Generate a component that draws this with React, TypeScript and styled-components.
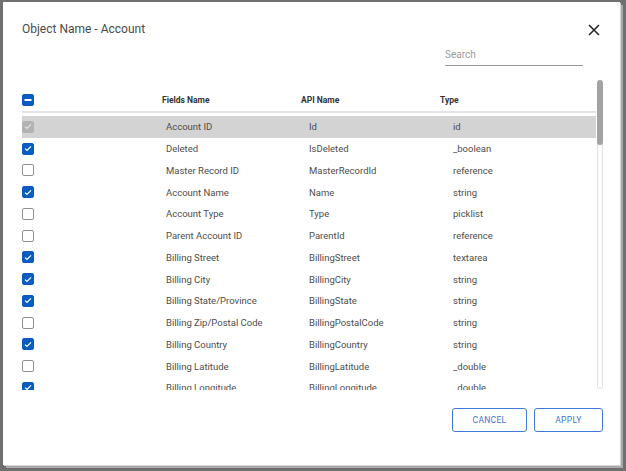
import React, { useEffect, useRef, useState } from "react";
import styled, { createGlobalStyle } from "styled-components";

type Field = { label: string; api: string; type: string; checked: boolean; locked?: boolean };

const rows: [string, string, string, boolean][] = [
  ["Account ID", "Id", "id", true],
  ["Deleted", "IsDeleted", "_boolean", true],
  ["Master Record ID", "MasterRecordId", "reference", false],
  ["Account Name", "Name", "string", true],
  ["Account Type", "Type", "picklist", false],
  ["Parent Account ID", "ParentId", "reference", false],
  ["Billing Street", "BillingStreet", "textarea", true],
  ["Billing City", "BillingCity", "string", true],
  ["Billing State/Province", "BillingState", "string", true],
  ["Billing Zip/Postal Code", "BillingPostalCode", "string", false],
  ["Billing Country", "BillingCountry", "string", true],
  ["Billing Latitude", "BillingLatitude", "_double", false],
  ["Billing Longitude", "BillingLongitude", "_double", true],
  ["Billing Geocode Accuracy", "BillingGeocodeAccuracy", "picklist", false],
  ["Billing Address", "BillingAddress", "address", true],
  ["Shipping Street", "ShippingStreet", "textarea", true],
  ["Shipping City", "ShippingCity", "string", true],
  ["Shipping State/Province", "ShippingState", "string", true],
  ["Shipping Zip/Postal Code", "ShippingPostalCode", "string", false],
  ["Shipping Country", "ShippingCountry", "string", true],
  ["Shipping Latitude", "ShippingLatitude", "_double", false],
  ["Shipping Longitude", "ShippingLongitude", "_double", false],
  ["Shipping Geocode Accuracy", "ShippingGeocodeAccuracy", "picklist", false],
  ["Shipping Address", "ShippingAddress", "address", false],
  ["Account Phone", "Phone", "phone", true],
  ["Account Fax", "Fax", "phone", false],
  ["Account Number", "AccountNumber", "string", true],
  ["Website", "Website", "url", true],
  ["Photo URL", "PhotoUrl", "url", false],
  ["SIC Code", "Sic", "string", false],
  ["Industry", "Industry", "picklist", true],
  ["Annual Revenue", "AnnualRevenue", "currency", true],
  ["Employees", "NumberOfEmployees", "_int", false],
  ["Ownership", "Ownership", "picklist", false],
  ["Ticker Symbol", "TickerSymbol", "string", false],
  ["Account Description", "Description", "textarea", true],
  ["Account Rating", "Rating", "picklist", false],
  ["Account Site", "Site", "string", false],
  ["Owner ID", "OwnerId", "reference", true],
  ["Created Date", "CreatedDate", "datetime", true],
  ["Created By ID", "CreatedById", "reference", false],
  ["Last Modified Date", "LastModifiedDate", "datetime", true],
  ["Last Modified By ID", "LastModifiedById", "reference", false],
  ["System Modstamp", "SystemModstamp", "datetime", false],
  ["Last Activity", "LastActivityDate", "date", false],
  ["Last Viewed Date", "LastViewedDate", "datetime", false],
  ["Last Referenced Date", "LastReferencedDate", "datetime", false],
  ["Data.com Key", "Jigsaw", "string", false],
  ["Jigsaw Company ID", "JigsawCompanyId", "string", false],
  ["Clean Status", "CleanStatus", "picklist", false],
  ["Account Source", "AccountSource", "picklist", true],
  ["D-U-N-S Number", "DunsNumber", "string", false],
  ["Tradestyle", "Tradestyle", "string", false],
  ["NAICS Code", "NaicsCode", "string", false],
  ["NAICS Description", "NaicsDesc", "string", false],
  ["Year Started", "YearStarted", "string", false],
  ["SIC Description", "SicDesc", "string", false],
  ["D&B Company ID", "DandbCompanyId", "reference", false],
  ["Operating Hour ID", "OperatingHoursId", "reference", false],
  ["Customer Priority", "CustomerPriority__c", "picklist", false],
  ["SLA", "SLA__c", "picklist", false],
  ["Active", "Active__c", "picklist", true],
  ["Number of Locations", "NumberofLocations__c", "_double", false],
  ["Upsell Opportunity", "UpsellOpportunity__c", "picklist", false],
  ["SLA Serial Number", "SLASerialNumber__c", "string", false],
  ["SLA Expiration Date", "SLAExpirationDate__c", "date", false],
];

const initialFields: Field[] = rows.map(([label, api, type, checked], i) => ({
  label,
  api,
  type,
  checked,
  locked: i === 0,
}));

const GlobalStyle = createGlobalStyle`
  html, body {
    margin: 0;
    padding: 0;
    background: #6f6f6f;
  }
  body {
    font-family: Roboto, "Liberation Sans", Arial, sans-serif;
    width: 626px;
    height: 471px;
    overflow: hidden;
  }
`;

const Frame = styled.div`
  width: 626px;
  height: 471px;
  padding: 2px 0 0 3px;
  box-sizing: border-box;
`;

const Dialog = styled.div`
  width: 617px;
  height: 463px;
  background: #fff;
  box-sizing: border-box;
  padding: 17px 17px 0 19px;
  display: flex;
  flex-direction: column;
  box-shadow: 1px 1px 0 #d6d6d6, 3px 3px 0 #a9a9a9;
`;

const TitleRow = styled.div`
  display: flex;
  align-items: center;
  justify-content: space-between;
  height: 20px;
`;

const Title = styled.h2`
  margin: 0;
  font-size: 12px;
  font-weight: 400;
  color: #4a4a4a;
`;

const CloseButton = styled.button`
  border: none;
  background: none;
  padding: 0;
  margin-right: 2px;
  width: 14px;
  height: 14px;
  display: flex;
  cursor: pointer;
  transform: translateY(1px);
`;

const SearchRow = styled.div`
  display: flex;
  justify-content: flex-end;
  margin-top: 6px;
  padding-right: 20px;
`;

const SearchInput = styled.input`
  width: 138px;
  height: 21px;
  box-sizing: border-box;
  border: none;
  border-bottom: 1px solid #9a9a9a;
  outline: none;
  padding: 0 0 1px 0;
  font-family: inherit;
  font-size: 10px;
  color: #444;
  &::placeholder {
    color: #9a9a9a;
  }
`;

const TableWrap = styled.div`
  margin-top: 14px;
  height: 310px;
  display: flex;
  gap: 1px;
`;

const List = styled.div`
  flex: 1;
  height: 100%;
  overflow-y: scroll;
  scrollbar-width: none;
  &::-webkit-scrollbar {
    display: none;
  }
`;

const Track = styled.div`
  width: 6px;
  height: 309px;
  box-sizing: border-box;
  border: 1px solid #e0e0e0;
  border-radius: 3px;
  position: relative;
`;

const Thumb = styled.div`
  position: absolute;
  left: -1px;
  right: -1px;
  background: #a3a3a3;
  border-radius: 3px;
`;

const Grid = styled.div<{ $header?: boolean; $selected?: boolean }>`
  display: grid;
  grid-template-columns: ${(p) => (p.$header ? "140px 139px 139px 1fr" : "144px 143px 144px 1fr")};
  align-items: center;
  height: ${(p) => (p.$header ? "33px" : "21.75px")};
  padding-top: ${(p) => (p.$header ? "8px" : "0")};
  box-sizing: border-box;
  background: ${(p) => (p.$selected ? "#d3d3d3" : "transparent")};
  border-bottom: ${(p) => (p.$header ? "2px solid #e3e3ea" : "none")};
  margin-bottom: ${(p) => (p.$header ? "3px" : "0")};
`;

const HeadCell = styled.div`
  font-size: 8.5px;
  font-weight: 700;
  color: #333;
`;

const Cell = styled.div`
  font-size: 9.5px;
  color: #4d4d4d;
  white-space: nowrap;
  overflow: hidden;
`;

const Box = styled.span<{ $on: boolean; $locked?: boolean }>`
  width: 12px;
  height: 12px;
  box-sizing: border-box;
  border-radius: 2px;
  display: flex;
  align-items: center;
  justify-content: center;
  cursor: pointer;
  background: ${(p) => (p.$locked ? "#b3b3b3" : p.$on ? "#0b5cc0" : "#fff")};
  border: 1px solid ${(p) => (p.$locked ? "#b3b3b3" : p.$on ? "#0b5cc0" : "#8f8f8f")};
`;

const Footer = styled.div`
  display: flex;
  justify-content: flex-end;
  gap: 7px;
  margin-top: 18px;
`;

const ActionButton = styled.button<{ $w: number }>`
  width: ${(p) => p.$w}px;
  height: 24px;
  border: 1px solid #3f7ad9;
  border-radius: 3px;
  background: #fff;
  color: #3f73d4;
  font-family: inherit;
  font-size: 8.5px;
  letter-spacing: 0.3px;
  cursor: pointer;
`;

const Check = ({ color }: { color: string }) => (
  <svg width="8" height="7" viewBox="0 0 8 7">
    <path d="M1 3.6 L3 5.5 L7 1.3" fill="none" stroke={color} strokeWidth="1.2" />
  </svg>
);

export default function App() {
  const [fields, setFields] = useState<Field[]>(initialFields);
  const listRef = useRef<HTMLDivElement>(null);
  const [thumb, setThumb] = useState({ top: 0, height: 64 });

  const measure = () => {
    const el = listRef.current;
    if (!el) return;
    const track = 309;
    const height = Math.max(20, (el.clientHeight / el.scrollHeight) * track);
    const max = el.scrollHeight - el.clientHeight;
    const top = max > 0 ? (el.scrollTop / max) * (track - height) : 0;
    setThumb({ top, height });
  };

  useEffect(measure, []);

  const toggle = (i: number) =>
    setFields((f) => f.map((x, j) => (j === i && !x.locked ? { ...x, checked: !x.checked } : x)));

  return (
    <>
      <GlobalStyle />
      <Frame>
        <Dialog>
          <TitleRow>
            <Title>Object Name - Account</Title>
            <CloseButton aria-label="close">
              <svg width="14" height="14" viewBox="0 0 14 14">
                <path d="M2 2 L12 12 M12 2 L2 12" stroke="#222" strokeWidth="1.5" />
              </svg>
            </CloseButton>
          </TitleRow>
          <SearchRow>
            <SearchInput placeholder="Search" />
          </SearchRow>
          <TableWrap>
            <List ref={listRef} onScroll={measure}>
              <Grid $header>
                <Box $on>
                  <svg width="8" height="8" viewBox="0 0 8 8">
                    <rect x="0.5" y="3" width="7" height="2" fill="#fff" />
                  </svg>
                </Box>
                <HeadCell>Fields Name</HeadCell>
                <HeadCell>API Name</HeadCell>
                <HeadCell>Type</HeadCell>
              </Grid>
              {fields.map((f, i) => (
                <Grid key={f.api} $selected={f.locked}>
                  <Box $on={f.checked} $locked={f.locked} onClick={() => toggle(i)}>
                    {f.checked && <Check color={f.locked ? "#e4e4e4" : "#fff"} />}
                  </Box>
                  <Cell>{f.label}</Cell>
                  <Cell>{f.api}</Cell>
                  <Cell>{f.type}</Cell>
                </Grid>
              ))}
            </List>
            <Track>
              <Thumb style={{ top: thumb.top - 1, height: thumb.height }} />
            </Track>
          </TableWrap>
          <Footer>
            <ActionButton $w={75}>CANCEL</ActionButton>
            <ActionButton $w={69}>APPLY</ActionButton>
          </Footer>
        </Dialog>
      </Frame>
    </>
  );
}
